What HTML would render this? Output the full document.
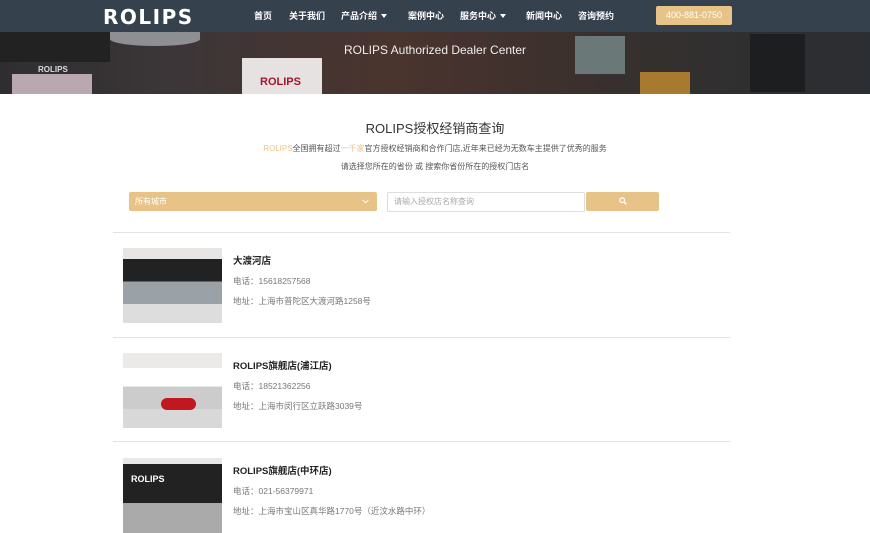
<!DOCTYPE html>
<html><head><meta charset="utf-8"><style>
*{margin:0;padding:0;box-sizing:border-box}
body{width:870px;height:516px;overflow:hidden;background:#fff;font-family:"Liberation Sans","Noto Sans CJK SC",sans-serif;position:relative}
.nav{position:absolute;left:0;top:0;width:870px;height:32px;background:#36414e}
.logo{position:absolute;left:103px;top:5px;color:#fff;font-weight:bold;font-size:20px;letter-spacing:1.5px;font-family:"DejaVu Sans","Liberation Sans",sans-serif}
.nav a{position:absolute;top:9px;color:#fff;font-size:9px;font-weight:bold;text-decoration:none}
.tri{display:inline-block;width:0;height:0;border-left:3px solid transparent;border-right:3px solid transparent;border-top:4px solid #fff;margin-left:4px;vertical-align:1px}
.phone{position:absolute;left:656px;top:6px;width:76px;height:19px;background:#e8c388;border-radius:2px;color:#fff;font-size:9px;text-align:center;line-height:19px}
.banner{position:absolute;left:0;top:32px;width:870px;height:62px;background:linear-gradient(90deg,#2e2e30 0%,#3c3638 20%,#4a342e 45%,#40312d 60%,#34302e 75%,#2b2e33 100%);overflow:hidden}
.banner .t{position:absolute;left:0;width:870px;top:11px;text-align:center;color:#eee;font-size:12px}
.blk{position:absolute}
h1{position:absolute;top:118px;width:870px;text-align:center;font-size:13px;font-weight:normal;color:#333}
.p{position:absolute;width:870px;text-align:center;font-size:8px;color:#555}
.o{color:#e8c388}
.sel{position:absolute;left:129px;top:192px;width:248px;height:19px;background:#e8c388;border-radius:2px;color:#fff;font-size:8px;line-height:19px;padding-left:6px}
.inp{position:absolute;left:387px;top:192px;width:198px;height:20px;border:1px solid #ddd;border-radius:2px;color:#aaa;font-size:8px;line-height:18px;padding-left:6px}
.btn{position:absolute;left:586px;top:192px;width:73px;height:19px;background:#e8c388;border-radius:2px}
.hr{position:absolute;left:113px;width:617px;height:1px;background:#e3e3e3}
.img{position:absolute;left:123px;width:99px;height:75px;background:#ccc;overflow:hidden}
.name{position:absolute;left:233px;font-size:9.5px;font-weight:bold;color:#222}
.inf{position:absolute;left:233px;font-size:8.5px;color:#777}
</style></head><body>
<div class="nav">
<div class="logo">ROLIPS</div>
<a style="left:254px">首页</a><a style="left:289px">关于我们</a><a style="left:341px">产品介绍<span class="tri"></span></a><a style="left:408px">案例中心</a><a style="left:460px">服务中心<span class="tri"></span></a><a style="left:526px">新闻中心</a><a style="left:578px">咨询预约</a>
<div class="phone">400-881-0750</div>
</div>
<div class="banner">
<div class="blk" style="left:0;top:0;width:110px;height:30px;background:#222"></div>
<div class="blk" style="left:110px;top:0;width:90px;height:14px;background:#8d8f93;border-radius:0 0 50% 50%"></div>
<div class="blk" style="left:12px;top:42px;width:80px;height:20px;background:#b9a8b0"></div>
<div class="blk" style="left:242px;top:26px;width:80px;height:36px;background:#e6e2e2"></div>
<div class="blk" style="left:260px;top:44px;color:#a2162a;font-size:11px;font-weight:bold">ROLIPS</div>
<div class="blk" style="left:38px;top:33px;color:#ddd;font-size:8px;font-weight:bold">ROLIPS</div>
<div class="blk" style="left:575px;top:4px;width:50px;height:38px;background:#6b7878"></div>
<div class="blk" style="left:640px;top:40px;width:50px;height:22px;background:#a87a30"></div>
<div class="blk" style="left:750px;top:2px;width:55px;height:58px;background:#1c1e20"></div>
<div class="t">ROLIPS Authorized Dealer Center</div>
</div>
<h1>ROLIPS授权经销商查询</h1>
<div class="p" style="top:143px"><span class="o">ROLIPS</span>全国拥有超过<span class="o">一千家</span>官方授权经销商和合作门店,近年来已经为无数车主提供了优秀的服务</div>
<div class="p" style="top:161px">请选择您所在的省份 或 搜索你省份所在的授权门店名</div>
<div class="sel">所有城市<svg style="position:absolute;right:8px;top:7px" width="7" height="5" viewBox="0 0 7 5"><path d="M0.5 0.8L3.5 3.8L6.5 0.8" fill="none" stroke="#fff" stroke-width="1"/></svg></div>
<div class="inp">请输入授权店名称查询</div>
<div class="btn"><svg style="position:absolute;left:33px;top:5px" width="8" height="8" viewBox="0 0 8 8"><circle cx="3.2" cy="3.2" r="2.3" fill="none" stroke="#fff" stroke-width="1.3"/><path d="M5 5L7.3 7.3" stroke="#fff" stroke-width="1.5"/></svg></div>
<div class="hr" style="top:232px"></div>
<div class="img" style="top:248px;background:linear-gradient(#e8e6e4 0 15%,#222 15% 45%,#9aa2a8 45% 75%,#ddd 75%)"></div>
<div class="name" style="top:253px">大渡河店</div>
<div class="inf" style="top:275px">电话：15618257568</div>
<div class="inf" style="top:295px">地址：上海市普陀区大渡河路1258号</div>
<div class="hr" style="top:337px"></div>
<div class="img" style="top:353px;background:linear-gradient(#eceae8 0 20%,#fff 20% 45%,#ccc 45% 75%,#d8d8d8 75%)"><div style="position:absolute;left:38px;top:45px;width:35px;height:12px;background:#c01820;border-radius:6px"></div></div>
<div class="name" style="top:358px">ROLIPS旗舰店(浦江店)</div>
<div class="inf" style="top:380px">电话：18521362256</div>
<div class="inf" style="top:400px">地址：上海市闵行区立跃路3039号</div>
<div class="hr" style="top:441px"></div>
<div class="img" style="top:458px;background:linear-gradient(#e8e8e8 0 8%,#222 8% 60%,#aaa 60%)"><div style="position:absolute;left:8px;top:16px;color:#fff;font-size:9px;font-weight:bold">ROLIPS</div></div>
<div class="name" style="top:463px">ROLIPS旗舰店(中环店)</div>
<div class="inf" style="top:485px">电话：021-56379971</div>
<div class="inf" style="top:505px">地址：上海市宝山区真华路1770号（近汶水路中环）</div>
</body></html>
